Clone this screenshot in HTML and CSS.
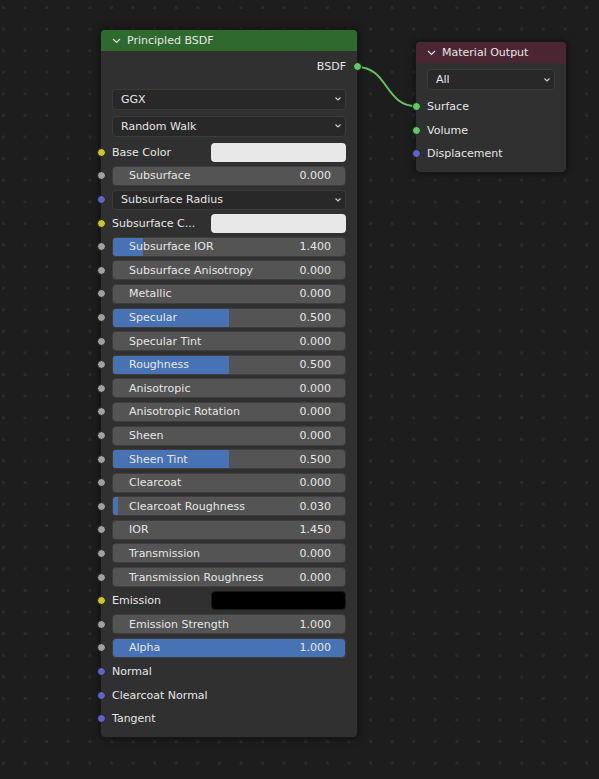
FILE: index.html
```html
<!DOCTYPE html>
<html>
<head>
<meta charset="utf-8">
<link rel="stylesheet" href="styles.css">
</head>
<body>
<div class="canvas">
  <svg class="links" width="599" height="779" viewBox="0 0 599 779">
    <path d="M357 67 C 388 67, 385 106, 416 106" fill="none" stroke="#62c462" stroke-width="2"/>
  </svg>

  <div class="node bsdf">
    <div class="header green">
      <svg class="chev" width="9" height="6" viewBox="0 0 9 6"><polyline points="1,1 4.5,4.5 8,1" fill="none" stroke="#dcdcdc" stroke-width="1.2"/></svg>
      <span>Principled BSDF</span>
    </div>
    <div class="body">
      <div class="row out"><span>BSDF</span><span class="sock right green-s"></span></div>
      <div class="dropdowns">
        <div class="drop"><span>GGX</span><svg width="6" height="4" viewBox="0 0 6 4"><polyline points="0.5,0.5 3,3 5.5,0.5" fill="none" stroke="#d0d0d0" stroke-width="1.1"/></svg></div>
        <div class="drop"><span>Random Walk</span><svg width="6" height="4" viewBox="0 0 6 4"><polyline points="0.5,0.5 3,3 5.5,0.5" fill="none" stroke="#d0d0d0" stroke-width="1.1"/></svg></div>
      </div>
      <div class="rows">
        <div class="row"><span class="sock yellow"></span><span class="clabel">Base Color</span><div class="swatch white"></div></div>
        <div class="row"><span class="sock gray"></span><div class="slider"><span>Subsurface</span><span>0.000</span></div></div>
        <div class="row"><span class="sock purple"></span><div class="drop"><span>Subsurface Radius</span><svg width="6" height="4" viewBox="0 0 6 4"><polyline points="0.5,0.5 3,3 5.5,0.5" fill="none" stroke="#d0d0d0" stroke-width="1.1"/></svg></div></div>
        <div class="row"><span class="sock yellow"></span><span class="clabel">Subsurface C...</span><div class="swatch white"></div></div>
        <div class="row"><span class="sock gray"></span><div class="slider"><div class="fill" style="width:30px"></div><span>Subsurface IOR</span><span>1.400</span></div></div>
        <div class="row"><span class="sock gray"></span><div class="slider"><span>Subsurface Anisotropy</span><span>0.000</span></div></div>
        <div class="row"><span class="sock gray"></span><div class="slider"><span>Metallic</span><span>0.000</span></div></div>
        <div class="row"><span class="sock gray"></span><div class="slider"><div class="fill" style="width:116px"></div><span>Specular</span><span>0.500</span></div></div>
        <div class="row"><span class="sock gray"></span><div class="slider"><span>Specular Tint</span><span>0.000</span></div></div>
        <div class="row"><span class="sock gray"></span><div class="slider"><div class="fill" style="width:116px"></div><span>Roughness</span><span>0.500</span></div></div>
        <div class="row"><span class="sock gray"></span><div class="slider"><span>Anisotropic</span><span>0.000</span></div></div>
        <div class="row"><span class="sock gray"></span><div class="slider"><span>Anisotropic Rotation</span><span>0.000</span></div></div>
        <div class="row"><span class="sock gray"></span><div class="slider"><span>Sheen</span><span>0.000</span></div></div>
        <div class="row"><span class="sock gray"></span><div class="slider"><div class="fill" style="width:116px"></div><span>Sheen Tint</span><span>0.500</span></div></div>
        <div class="row"><span class="sock gray"></span><div class="slider"><span>Clearcoat</span><span>0.000</span></div></div>
        <div class="row"><span class="sock gray"></span><div class="slider"><div class="fill" style="width:5px"></div><span>Clearcoat Roughness</span><span>0.030</span></div></div>
        <div class="row"><span class="sock gray"></span><div class="slider"><span>IOR</span><span>1.450</span></div></div>
        <div class="row"><span class="sock gray"></span><div class="slider"><span>Transmission</span><span>0.000</span></div></div>
        <div class="row"><span class="sock gray"></span><div class="slider"><span>Transmission Roughness</span><span>0.000</span></div></div>
        <div class="row"><span class="sock yellow"></span><span class="clabel">Emission</span><div class="swatch black"></div></div>
        <div class="row"><span class="sock gray"></span><div class="slider"><span>Emission Strength</span><span>1.000</span></div></div>
        <div class="row"><span class="sock gray"></span><div class="slider full"><span>Alpha</span><span>1.000</span></div></div>
        <div class="row"><span class="sock purple"></span><span>Normal</span></div>
        <div class="row"><span class="sock purple"></span><span>Clearcoat Normal</span></div>
        <div class="row"><span class="sock purple"></span><span>Tangent</span></div>
      </div>
    </div>
  </div>

  <div class="node matout">
    <div class="header red">
      <svg class="chev" width="9" height="6" viewBox="0 0 9 6"><polyline points="1,1 4.5,4.5 8,1" fill="none" stroke="#dcdcdc" stroke-width="1.2"/></svg>
      <span>Material Output</span>
    </div>
    <div class="body mbody">
      <div class="drop"><span>All</span><svg width="6" height="4" viewBox="0 0 6 4"><polyline points="0.5,0.5 3,3 5.5,0.5" fill="none" stroke="#d0d0d0" stroke-width="1.1"/></svg></div>
      <div class="rows mrows">
        <div class="row"><span class="sock green-s"></span><span>Surface</span></div>
        <div class="row"><span class="sock green-s"></span><span>Volume</span></div>
        <div class="row"><span class="sock purple"></span><span>Displacement</span></div>
      </div>
    </div>
  </div>
</div>
</body>
</html>
```

FILE: styles.css
```css
html, body {
  margin: 0;
  padding: 0;
}
body {
  background: #1d1d1d;
  font-family: "DejaVu Sans", sans-serif;
  font-size: 11px;
  color: #e6e6e6;
}
.canvas {
  position: relative;
  width: 599px;
  height: 779px;
  overflow: hidden;
  background-color: #1d1d1d;
  background-image: conic-gradient(from 270deg at 3px 3px, #2a2a2a 90deg, transparent 0);
  background-size: 21.6px 21.6px;
  background-position: 2px 6px;
}
.links {
  position: absolute;
  left: 0;
  top: 0;
}
.node {
  position: absolute;
  box-sizing: border-box;
  background: #303030;
  border: 1px solid #181818;
  border-radius: 5px;
  box-shadow: 0 0 7px rgba(0, 0, 0, 0.55);
}
.bsdf {
  left: 100px;
  top: 29px;
  width: 258px;
}
.matout {
  left: 415px;
  top: 41px;
  width: 152px;
}
.header {
  height: 21px;
  display: flex;
  align-items: center;
  gap: 6px;
  padding-left: 11px;
  border-radius: 4px 4px 0 0;
  color: #e6e6e6;
}
.header.green { background: #2e6a2d; }
.header.red { background: #4b2531; }
.chev { display: block; }
.body {
  padding: 4px 11px 7px 11px;
}
.mbody {
  padding-top: 6px;
  padding-bottom: 6px;
}
.row {
  position: relative;
  height: 23.6px;
  display: flex;
  align-items: center;
}
.row.out {
  justify-content: flex-end;
}
.dropdowns {
  margin-top: 10px;
  display: flex;
  flex-direction: column;
  gap: 6px;
}
.rows {
  margin-top: 4px;
}
.rows.mrows {
  margin-top: 5px;
}
.drop {
  box-sizing: border-box;
  flex: none;
  width: 100%;
  height: 21px;
  display: flex;
  align-items: center;
  justify-content: space-between;
  padding: 0 4px 0 8px;
  background: #282828;
  border: 1px solid #3b3b3b;
  border-radius: 4px;
}
.row .drop {
  flex: 1;
  height: 20px;
}
.drop svg { display: block; }
.sock {
  position: absolute;
  left: -15.5px;
  top: 50%;
  width: 7px;
  height: 7px;
  margin-top: -4.5px;
  border-radius: 50%;
  border: 1px solid #1c1c1c;
}
.sock.right {
  left: auto;
  right: -15.5px;
}
.yellow { background: #c7c729; }
.gray { background: #a1a1a1; }
.purple { background: #6363c7; }
.green-s { background: #63c763; }
.clabel {
  flex: 0 0 99px;
  white-space: nowrap;
}
.swatch {
  flex: 1;
  height: 19px;
  border-radius: 4px;
}
.swatch.white { background: #e8e8e8; }
.swatch.black { background: #000; border: 1px solid #1a1a1a; box-sizing: border-box; }
.slider {
  position: relative;
  box-sizing: border-box;
  flex: 1;
  height: 20px;
  display: flex;
  align-items: center;
  justify-content: space-between;
  padding: 0 14px 0 16px;
  background: #545454;
  border: 1px solid #3d3d3d;
  border-radius: 4px;
  overflow: hidden;
}
.slider span {
  position: relative;
  white-space: nowrap;
}
.slider .fill {
  position: absolute;
  left: 0;
  top: 0;
  bottom: 0;
  background: #4772b3;
}
.slider.full {
  background: #4772b3;
}
```
